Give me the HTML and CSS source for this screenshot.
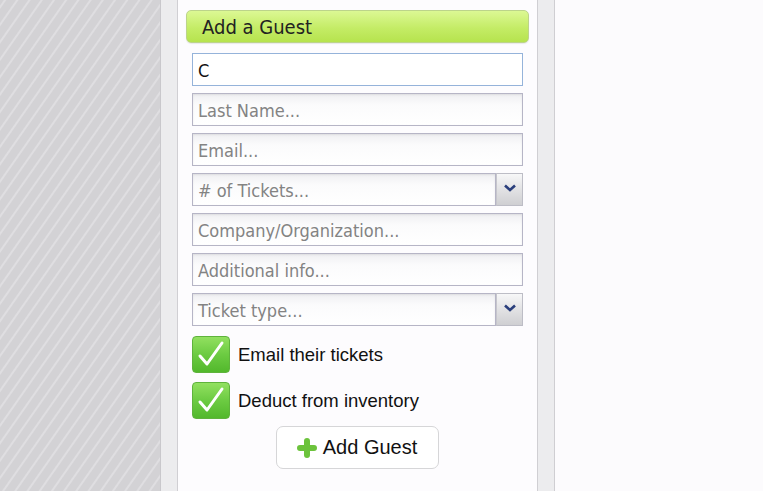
FILE: index.html
```html
<!DOCTYPE html>
<html>
<head>
<meta charset="utf-8">
<link rel="stylesheet" href="styles.css">
</head>
<body>
<div class="page">
  <div class="stripes"></div>
  <div class="frame">
    <div class="panel">
      <div class="header">Add a Guest</div>
      <div class="form">
        <div class="field focus">C</div>
        <div class="field placeholder">Last Name...</div>
        <div class="field placeholder">Email...</div>
        <div class="select">
          <div class="field placeholder">
            # of Tickets...
          </div>
          <div class="arrow"><svg width="12" height="8" viewBox="0 0 12 8"><path d="M1 1.5 L6 6 L11 1.5" fill="none" stroke="#2b3f7c" stroke-width="2.6" stroke-linejoin="miter"/></svg></div>
        </div>
        <div class="field placeholder">Company/Organization...</div>
        <div class="field placeholder">Additional info...</div>
        <div class="select">
          <div class="field placeholder">Ticket type...</div>
          <div class="arrow"><svg width="12" height="8" viewBox="0 0 12 8"><path d="M1 1.5 L6 6 L11 1.5" fill="none" stroke="#2b3f7c" stroke-width="2.6" stroke-linejoin="miter"/></svg></div>
        </div>
        <div class="checks">
          <div class="check-row">
            <div class="box"><svg width="38" height="37" viewBox="0 0 38 37"><path d="M8 20 L15 28 L30 7" fill="none" stroke="#ffffff" stroke-width="3" stroke-linecap="round" stroke-linejoin="round"/></svg></div>
            <span class="label">Email their tickets</span>
          </div>
          <div class="check-row">
            <div class="box"><svg width="38" height="37" viewBox="0 0 38 37"><path d="M8 20 L15 28 L30 7" fill="none" stroke="#ffffff" stroke-width="3" stroke-linecap="round" stroke-linejoin="round"/></svg></div>
            <span class="label">Deduct from inventory</span>
          </div>
        </div>
        <div class="btn-row">
          <div class="button">
            <svg width="20" height="20" viewBox="0 0 20 20"><path d="M10 3 V17 M3 10 H17" stroke="#6cc33c" stroke-width="6" stroke-linecap="round"/></svg>
            <span>Add Guest</span>
          </div>
        </div>
      </div>
    </div>
  </div>
  <div class="rest"></div>
</div>
</body>
</html>
```

FILE: styles.css
```css
html, body {
  margin: 0;
  padding: 0;
  height: 100%;
  background: #fcfbfd;
  overflow: hidden;
}
.page {
  display: flex;
  height: 491px;
  width: 763px;
}
.stripes {
  width: 160px;
  flex: none;
  background-color: #d3d2d5;
  background-image: repeating-linear-gradient(-55deg, #d3d2d5 0px, #d3d2d5 7px, #dfdee1 8px, #dfdee1 9px, #d3d2d5 10px);
}
.frame {
  width: 361px;
  flex: none;
  padding: 0 16px;
  background: #ececee;
  border-left: 1px solid #c9c8cc;
  border-right: 1px solid #cfced2;
  display: flex;
}
.panel {
  flex: 1;
  background: #fdfcfe;
  border-left: 1px solid #d0cfd3;
  border-right: 1px solid #d0cfd3;
  padding: 10px 8px 0 8px;
}
.header {
  height: 31px;
  border: 1px solid #bcd48a;
  border-radius: 5px;
  background: linear-gradient(#dcf894, #c4ec66 55%, #b6e34e);
  font-family: "DejaVu Sans Condensed", "DejaVu Sans", sans-serif;
  font-size: 20px;
  color: #222;
  line-height: 32px;
  padding-left: 15px;
  box-shadow: 0 1px 1px rgba(0,0,0,0.08);
}
.form {
  margin: 10px 6px 0 6px;
  display: flex;
  flex-direction: column;
  gap: 7px;
}
.field {
  box-sizing: border-box;
  height: 33px;
  border: 1px solid #b6b5c6;
  background: linear-gradient(#efeff2, #fbfbfc 35%, #ffffff);
  box-shadow: inset 0 1px 2px rgba(0,0,0,0.08);
  font-family: "DejaVu Sans Condensed", "DejaVu Sans", sans-serif;
  font-size: 18px;
  line-height: 33px;
  padding-left: 5px;
  color: #111;
}
.field.focus {
  border-color: #95b3da;
  background: #fff;
  box-shadow: none;
}
.field.placeholder {
  color: #838383;
}
.select {
  display: flex;
  height: 33px;
}
.select .field {
  flex: 1;
}
.arrow {
  box-sizing: border-box;
  width: 27px;
  height: 33px;
  border: 1px solid #bdbdc6;
  border-left: 1px solid #c6c6cc;
  background: linear-gradient(#f7f7f8, #e2e2e4 50%, #cfcfd2);
  display: flex;
  align-items: center;
  justify-content: center;
  padding-bottom: 4px;
}
.checks {
  margin-top: 3px;
  display: flex;
  flex-direction: column;
  gap: 9px;
}
.check-row {
  display: flex;
  align-items: center;
  gap: 8px;
}
.box {
  box-sizing: border-box;
  width: 38px;
  height: 37px;
  border-radius: 4px;
  border: 1px solid #5fb33c;
  background: linear-gradient(#92e060, #6ccb42 50%, #52b82c);
  display: flex;
  flex: none;
  overflow: hidden;
}
.box svg {
  margin: -1px;
}
.label {
  font-family: "Liberation Sans", Arial, sans-serif;
  font-size: 18.5px;
  color: #111;
}
.btn-row {
  display: flex;
  justify-content: center;
  margin-top: 0;
  padding-right: 1px;
}
.button {
  box-sizing: border-box;
  width: 163px;
  height: 43px;
  border: 1px solid #d6d6d8;
  border-radius: 7px;
  background: #fff;
  display: flex;
  align-items: center;
  justify-content: center;
  gap: 6px;
  font-family: "Liberation Sans", Arial, sans-serif;
  font-size: 20px;
  color: #111;
}
.rest {
  flex: 1;
  background: #fcfbfd;
}
```
